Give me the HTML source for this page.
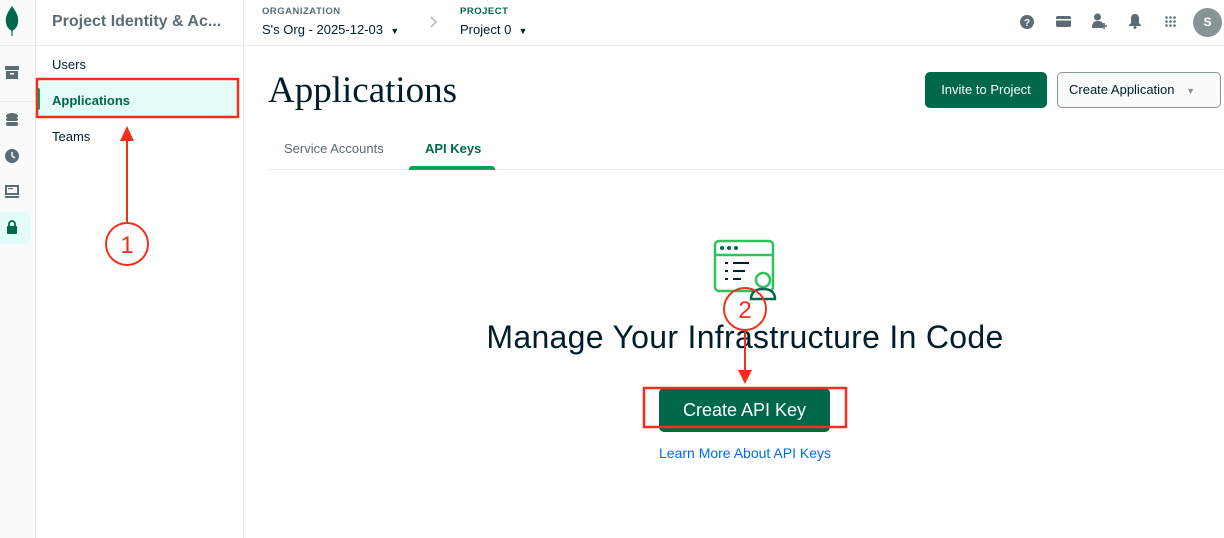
<!DOCTYPE html>
<html><head><meta charset="utf-8"><style>
*{margin:0;padding:0;box-sizing:border-box}
body{width:1224px;height:538px;overflow:hidden;background:#fff;font-family:"Liberation Sans",sans-serif;color:#001e2b;position:relative}
.abs{position:absolute}
</style></head><body>
<div class="abs" style="left:0;top:0;width:36px;height:538px;background:#f9fbfa;border-right:1px solid #e8edeb"></div>
<div class="abs" style="left:0;top:45px;width:1224px;height:1px;background:#e8edeb"></div>
<div class="abs" style="left:0;top:101px;width:36px;height:1px;background:#e8edeb"></div>
<svg class="abs" style="left:4px;top:6px" width="16" height="30" viewBox="0 0 16 30"><path d="M8 0C4 6 1 10 2 17c1 5 4 7 6 8 2-1 5-3 6-8 1-7-2-11-6-17z" fill="#00684a"/><rect x="7.4" y="22" width="1.2" height="8" fill="#00684a"/></svg>
<svg class="abs" style="left:5px;top:66px" width="14" height="13"><rect x="0" y="0" width="14" height="4" fill="#5c6c75"/><rect x="1" y="5" width="12" height="8" fill="#5c6c75"/><rect x="5" y="7" width="4" height="1.5" fill="#f9fbfa"/></svg>
<svg class="abs" style="left:6px;top:113px" width="12" height="14"><ellipse cx="6" cy="3" rx="6" ry="3" fill="#5c6c75"/><rect x="0" y="5" width="12" height="3" rx="1.5" fill="#5c6c75"/><rect x="0" y="9" width="12" height="4" rx="2" fill="#5c6c75"/></svg>
<svg class="abs" style="left:5px;top:149px" width="14" height="14"><circle cx="7" cy="7" r="7" fill="#5c6c75"/><path d="M7 3v4l3 2" stroke="#f9fbfa" stroke-width="1.5" fill="none"/></svg>
<svg class="abs" style="left:5px;top:185px" width="14" height="13"><rect x="0" y="0" width="14" height="10" fill="#5c6c75"/><rect x="2" y="2" width="10" height="6" fill="#f9fbfa"/><rect x="3" y="3" width="5" height="1.2" fill="#5c6c75"/><rect x="0" y="11" width="14" height="2" fill="#5c6c75"/></svg>
<div class="abs" style="left:0;top:212px;width:31px;height:32px;background:#e3fcf7;border-radius:0 6px 6px 0"></div>
<svg class="abs" style="left:7px;top:220px" width="10" height="14"><path d="M2 6V4a3 3 0 016 0v2" stroke="#00684a" stroke-width="1.8" fill="none"/><rect x="0" y="6" width="10" height="8" rx="1" fill="#00684a"/></svg>
<div class="abs" style="left:243px;top:0;width:1px;height:538px;background:#e8edeb"></div>
<div class="abs" style="left:52px;top:13px;font-size:16px;font-weight:bold;color:#5c6c75">Project Identity &amp; Ac...</div>
<div class="abs" style="left:52px;top:57px;font-size:13px">Users</div>
<div class="abs" style="left:37px;top:82px;width:200px;height:36px;background:#e3fcf7"></div>
<div class="abs" style="left:37px;top:88px;width:3px;height:22px;background:#00a35c;border-radius:0 2px 2px 0"></div>
<div class="abs" style="left:52px;top:93px;font-size:13px;font-weight:bold;color:#00684a">Applications</div>
<div class="abs" style="left:52px;top:129px;font-size:13px">Teams</div>
<div class="abs" style="left:262px;top:6px;font-size:9.5px;font-weight:bold;color:#5c6c75;letter-spacing:.5px">ORGANIZATION</div>
<div class="abs" style="left:262px;top:22px;font-size:13px">S's Org - 2025-12-03 &nbsp;<span style="font-size:9px">▼</span></div>
<svg class="abs" style="left:429px;top:15px" width="10" height="14"><path d="M2 2l5 5-5 5" stroke="#c1c7c6" stroke-width="2" fill="none"/></svg>
<div class="abs" style="left:460px;top:6px;font-size:9.5px;font-weight:bold;color:#00684a;letter-spacing:.5px">PROJECT</div>
<div class="abs" style="left:460px;top:22px;font-size:13px">Project 0 &nbsp;<span style="font-size:9px">▼</span></div>
<svg class="abs" style="left:1019px;top:14px" width="16" height="16"><circle cx="8" cy="8" r="7" fill="#5c6c75"/><text x="8" y="12" font-size="10" font-weight="bold" fill="#fff" text-anchor="middle" font-family="Liberation Sans">?</text></svg>
<svg class="abs" style="left:1056px;top:16px" width="15" height="11"><rect width="15" height="11" rx="2" fill="#5c6c75"/><rect y="3" width="15" height="1.5" fill="#fff"/></svg>
<svg class="abs" style="left:1092px;top:13px" width="15" height="17"><circle cx="5.5" cy="4" r="3.5" fill="#5c6c75"/><path d="M0 15c0-5 2-7 5.5-7s5 1 5.5 3v4z" fill="#5c6c75"/><path d="M12 10v6M9 13h6" stroke="#5c6c75" stroke-width="1.6"/></svg>
<svg class="abs" style="left:1129px;top:13px" width="12" height="16"><path d="M6 1c-3 0-4 2-4 5v4l-2 2v1h12v-1l-2-2V6c0-3-1-5-4-5z" fill="#5c6c75"/><circle cx="6" cy="14.5" r="1.5" fill="#5c6c75"/></svg>
<svg class="abs" style="left:1165px;top:16px" width="11" height="11" fill="#5c6c75"><circle cx="1.5" cy="1.5" r="1.3"/><circle cx="5.5" cy="1.5" r="1.3"/><circle cx="9.5" cy="1.5" r="1.3"/><circle cx="1.5" cy="5.5" r="1.3"/><circle cx="5.5" cy="5.5" r="1.3"/><circle cx="9.5" cy="5.5" r="1.3"/><circle cx="1.5" cy="9.5" r="1.3"/><circle cx="5.5" cy="9.5" r="1.3"/><circle cx="9.5" cy="9.5" r="1.3"/></svg>
<div class="abs" style="left:1193px;top:8px;width:29px;height:29px;border-radius:50%;background:#889397;color:#fff;font-size:12px;font-weight:bold;text-align:center;line-height:29px">S</div>
<div class="abs" style="left:268px;top:69px;font-family:'Liberation Serif',serif;font-size:37px;color:#001e2b">Applications</div>
<div class="abs" style="left:925px;top:72px;width:122px;height:36px;background:#00684a;border-radius:5px;color:#fff;font-size:13px;text-align:center;line-height:36px">Invite to Project</div>
<div class="abs" style="left:1057px;top:72px;width:164px;height:36px;background:#f9fbfa;border:1px solid #889397;border-radius:5px;font-size:13px;line-height:34px;padding-left:11px">Create Application <span style="color:#889397;font-size:9px;margin-left:8px">▼</span></div>
<div class="abs" style="left:268px;top:169px;width:956px;height:1px;background:#e8edeb"></div>
<div class="abs" style="left:284px;top:141px;font-size:13px;color:#5c6c75">Service Accounts</div>
<div class="abs" style="left:425px;top:141px;font-size:13px;font-weight:bold;color:#00684a">API Keys</div>
<div class="abs" style="left:409px;top:166px;width:86px;height:4px;background:#00a35c;border-radius:3px 3px 0 0"></div>
<svg class="abs" style="left:713px;top:239px" width="64" height="62" viewBox="0 0 64 62"><rect x="2" y="2" width="58" height="50" rx="4" fill="#fff" stroke="#2dc35c" stroke-width="2.5"/><line x1="2" y1="16" x2="60" y2="16" stroke="#2dc35c" stroke-width="2.5"/><circle cx="9" cy="9" r="2" fill="#00684a"/><circle cx="16" cy="9" r="2" fill="#00684a"/><circle cx="23" cy="9" r="2" fill="#00684a"/><path d="M12 24h3M20 24h16M12 32h3M20 32h12M12 40h3M20 40h8" stroke="#001e2b" stroke-width="2"/><circle cx="50" cy="41" r="7" fill="#fff" stroke="#2dc35c" stroke-width="2.5"/><path d="M38 60c0-7 5-10 12-10s12 3 12 10z" fill="#fff" stroke="#00684a" stroke-width="2.5"/></svg>
<div class="abs" style="left:395px;top:319px;width:700px;text-align:center;font-size:32px;letter-spacing:0.3px;color:#001e2b">Manage Your Infrastructure In Code</div>
<div class="abs" style="left:659px;top:388px;width:171px;height:44px;background:#00684a;border-radius:5px;color:#fff;font-size:18px;text-align:center;line-height:44px">Create API Key</div>
<div class="abs" style="left:545px;top:445px;width:400px;text-align:center;font-size:14px;color:#016bf8">Learn More About API Keys</div>
<svg class="abs" style="left:0;top:0" width="1224" height="538">
<rect x="37" y="79" width="201" height="38" fill="none" stroke="#f0301a" stroke-width="2.5"/>
<line x1="127" y1="140" x2="127" y2="223" stroke="#f0301a" stroke-width="2"/>
<path d="M120 141L127 126L134 141z" fill="#f0301a"/>
<circle cx="127" cy="244" r="21" fill="none" stroke="#f0301a" stroke-width="2"/>
<text x="127" y="253" font-size="24" fill="#f0301a" text-anchor="middle" font-family="Liberation Sans">1</text>
<circle cx="745" cy="309" r="21" fill="none" stroke="#f0301a" stroke-width="2"/>
<text x="745" y="318" font-size="24" fill="#f0301a" text-anchor="middle" font-family="Liberation Sans">2</text>
<line x1="745" y1="330" x2="745" y2="372" stroke="#f0301a" stroke-width="2"/>
<path d="M738 370L745 384L752 370z" fill="#f0301a"/>
<rect x="644" y="388" width="202" height="39" fill="none" stroke="#f0301a" stroke-width="2.5"/>
</svg>
</body></html>
